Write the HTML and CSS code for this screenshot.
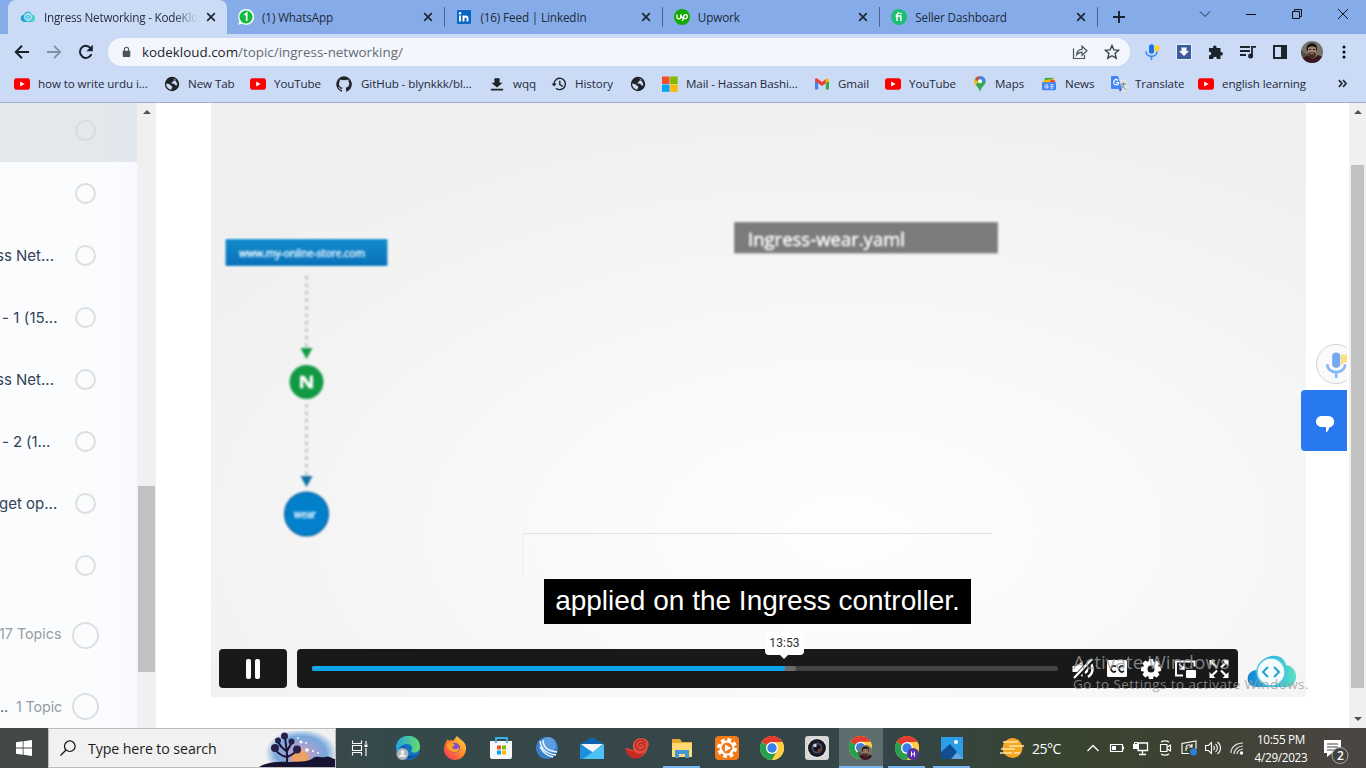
FILE: index.html
```html
<!DOCTYPE html>
<html lang="en">
<head>
<meta charset="utf-8">
<title>Ingress Networking - KodeKloud</title>
<link rel="stylesheet" href="styles.css">
</head>
<body>
<svg class="defs" aria-hidden="true">
  <symbol id="close" viewBox="0 0 10 10"><path d="M1.200 1.200l7.600 7.600M8.800 1.200L1.200 8.800" stroke="#1d2734" stroke-width="1.700"/></symbol>
  <symbol id="youtube" viewBox="0 0 16 16"><rect y="2.300" width="16" height="11.400" rx="2.600" fill="#f00"/><path d="M6.200 5.600v4.800L10.600 8z" fill="#fff"/></symbol>
  <symbol id="globe" viewBox="0 0 16 16"><circle cx="8" cy="8" r="7.200" fill="#202327"/><path d="M2.200 7.400c2 .1 3.600.4 4.200 1.700.5 1.200 1.700.7 1.900 1.900.2 1-.9 1-.8 2.600C4.600 13.300 2 11 2.200 7.400zM7.300 2.300l3.800.6c.8 1-.3 1.700-1.500 1.800-1 .1-.5 1.600-1.800 1.700-.9.1-.5 1.200.3 1.200 1.700 0 2.500.6 3.100 1.400.7.900 1.300.6 2.100.3-.2-3-2.500-6.600-6-7z" fill="#cbdbf6"/></symbol>
  <symbol id="chrome" viewBox="0 0 24 24"><circle cx="12" cy="12" r="12" fill="#ffce43"/><path d="M12 12L1.600 6A12 12 0 0 1 22.400 6z" fill="#e33b2e"/><path d="M1.600 6A12 12 0 0 0 12 24l5.200-9L12 12z" fill="#27a14d"/><path d="M12 6h10.400A12 12 0 0 1 12 24l5.200-9z" fill="#ffce43"/><circle cx="12" cy="12" r="6" fill="#fff"/><circle cx="12" cy="12" r="4.700" fill="#3b7de9"/></symbol>
  <symbol id="face" viewBox="0 0 22 22"><clipPath id="fc"><circle cx="11" cy="11" r="11"/></clipPath><g clip-path="url(#fc)"><rect width="22" height="22" fill="#77736a"/><path d="M0 9l7 5-3 8H0z" fill="#524f48"/><path d="M2 22v-5l5-3 5 4 5-4 5 2v6z" fill="#3b1720"/><path d="M5.500 8C5 1 16.500 0 16 8l-1 3-1-4H8l-1 4z" fill="#17130f"/><path d="M7 7c1-2 7-2 8 0v6c-1 5-7 5-8 0z" fill="#a8826f"/><path d="M7 12c2-1 6-1 8 0-.5 7-7 8-8 0z" fill="#3d2c25"/><path d="M9 12.800h4" stroke="#a8826f"/><path d="M8 8.500h2M12 8.500h2" stroke="#241b18"/></g></symbol>
  <symbol id="mic" viewBox="0 0 16 16"><path d="M10.500 1.500h5v5h-3l-2 2z" fill="#ffd02e"/><rect x="5" y=".3" width="5" height="9.500" rx="2.500" fill="#1a73e8"/><path d="M2 7.500c0 6.500 11 6.500 11 0M7.500 12.500V16" fill="none" stroke="#3b8bed" stroke-width="1.600"/></symbol>
</svg>

<header class="tabs">
  <div class="tab tab-active">
    <svg class="i16" viewBox="0 0 16 16"><defs><linearGradient id="kk"><stop stop-color="#1795d8"/><stop offset="1" stop-color="#4fdccb"/></linearGradient></defs><path d="M4 13a3.800 3.800 0 0 1 0-7.500C5 1.500 11 1.500 12 5.500a3.800 3.800 0 0 1 0 7.500z" fill="url(#kk)"/><circle cx="8" cy="8" r="3.600" fill="#8ed9ee" stroke="#c6eef8" stroke-width=".8"/><path d="M7 6.500L5.700 8 7 9.500M9 6.500L10.300 8 9 9.500" fill="none" stroke="#22a5d5" stroke-width=".9"/></svg>
    <span class="tab-title fade">Ingress Networking - KodeKlo</span><svg class="x"><use href="#close"/></svg>
  </div>
  <div class="tab"><svg class="i16" viewBox="0 0 16 16"><path d="M.2 15.800L1.300 11.900A8 8 0 1 1 4.200 14.800z" fill="#e9fff0"/><circle cx="8" cy="8" r="6.500" fill="#13b93d"/><path d="M6.400 5.900L8.700 4.200V12" fill="none" stroke="#fff" stroke-width="1.700"/></svg><span class="tab-title">(1) WhatsApp</span><svg class="x"><use href="#close"/></svg></div>
  <div class="tab"><svg class="i16" viewBox="0 0 16 16"><rect x="1" y="1" width="14" height="14" rx="1" fill="#0a66c2"/><path d="M4 6.600v6M7.500 12.600v-6M7.500 9.500c.2-2.600 4-2.600 4 0v3.100" fill="none" stroke="#fff" stroke-width="1.900"/><circle cx="4" cy="4.200" r="1.200" fill="#fff"/></svg><span class="tab-title">(16) Feed | LinkedIn</span><svg class="x"><use href="#close"/></svg></div>
  <div class="tab"><svg class="i16" viewBox="0 0 16 16"><circle cx="8" cy="8" r="8" fill="#14a800"/><path d="M3 5.500V8c0 2.500 3.700 2.500 3.700 0V5.500c.6 2.300 1.600 3.600 2.800 4.100M8.500 12l1.300-5c.9-2.300 4-1.600 3.500.8-.4 2-2.700 2.200-3.800 1.100" fill="none" stroke="#fff" stroke-width="1.300"/></svg><span class="tab-title">Upwork</span><svg class="x"><use href="#close"/></svg></div>
  <div class="tab"><svg class="i16" viewBox="0 0 16 16"><circle cx="8" cy="8" r="8" fill="#1dbf73"/><path d="M6 12V6.200c0-1.700.8-2.200 2.500-2.100M4.500 7h5.300v5" fill="none" stroke="#fff" stroke-width="1.500"/><circle cx="9.900" cy="4.600" r=".9" fill="#fff"/></svg><span class="tab-title">Seller Dashboard</span><svg class="x"><use href="#close"/></svg></div>
  <svg class="plus" viewBox="0 0 12 12"><path d="M6 0v12M0 6h12" stroke="#182334" stroke-width="1.900"/></svg>
  <div class="winbtns">
    <svg viewBox="0 0 12 12"><path d="M1 3.500l5 5 5-5" fill="none" stroke="#1b2b45"/></svg>
    <svg viewBox="0 0 12 12"><path d="M1 6.500h10" stroke="#111"/></svg>
    <svg viewBox="0 0 12 12"><path d="M1.500 3.500h7v7h-7zM3.500 3V1.500h7v7H9" fill="none" stroke="#111"/></svg>
    <svg viewBox="0 0 12 12"><path d="M1 1l10 10M11 1L1 11" stroke="#111"/></svg>
  </div>
</header>

<nav class="toolbar">
  <svg class="nav" viewBox="0 0 16 16"><path d="M15 8H2M8 1.800L1.800 8 8 14.200" fill="none" stroke="#17202c" stroke-width="2"/></svg>
  <svg class="nav" viewBox="0 0 16 16"><path d="M1 8h13M8 1.800L14.200 8 8 14.200" fill="none" stroke="#8290a8" stroke-width="1.800"/></svg>
  <svg class="nav" viewBox="0 0 16 16"><path d="M13.500 10.200A6 6 0 1 1 13 4.600" fill="none" stroke="#17202c" stroke-width="2"/><path d="M14.800.8v6.400H8.400z" fill="#17202c"/></svg>
  <div class="omnibox">
    <svg class="lock" viewBox="0 0 10 12"><rect x=".8" y="4.500" width="8.400" height="7" rx="1" fill="#4c545e"/><path d="M2.700 5V3a2.300 2.300 0 0 1 4.600 0v2" fill="none" stroke="#4c545e" stroke-width="1.200"/></svg>
    <span class="url">kodekloud.com<span class="path">/topic/ingress-networking/</span></span>
    <svg class="i16" viewBox="0 0 16 16"><path d="M1.500 4.500v10h11V11" fill="none" stroke="#4c545e" stroke-width="1.200"/><path d="M4.500 11c.5-4 2.500-5.500 5.500-5.600V2.200L15 6.800l-5 4.500V8.200c-2.500 0-4 .8-5.500 2.800z" fill="none" stroke="#4c545e" stroke-width="1.200"/></svg>
    <svg class="i16" viewBox="0 0 16 16"><path d="M8 1.500l1.900 4.400 4.800.4-3.600 3.200 1.100 4.700L8 11.700l-4.200 2.500 1.100-4.700L1.300 6.300l4.800-.4z" fill="none" stroke="#3c4550" stroke-width="1.400"/></svg>
  </div>
  <div class="exts">
    <svg class="i16"><use href="#mic"/></svg>
    <svg class="i16" viewBox="0 0 16 16"><rect x=".5" y=".5" width="15" height="15" fill="#3c5b9d" stroke="#e8eefb"/><path d="M5.500 3.500h5V7H13l-5 5-5-5h2.500z" fill="#f4f8ff"/></svg>
    <svg class="i16" viewBox="0 0 16 16"><path d="M1 4h4.200C4.300.7 9.300.7 8.500 4H12.500v4c3.200-.8 3.200 4.200 0 3.400V15H8.800c.5-3-4-3-3.500 0H1v-3.800c3 .4 3-4 0-3.500z" fill="#1d232c"/></svg>
    <svg class="i16" viewBox="0 0 16 16"><path d="M0 3h10M0 7h10M0 11h6M12 12.500V2.800h4" fill="none" stroke="#1d232c" stroke-width="1.800"/><circle cx="10.600" cy="12" r="2.500" fill="#1d232c"/></svg>
    <svg class="i16" viewBox="0 0 16 16"><path d="M2 2h12v12H2z" fill="none" stroke="#1d232c" stroke-width="2"/><path d="M9 2h5v12H9z" fill="#1d232c"/></svg>
    <svg class="i22"><use href="#face"/></svg>
    <svg class="i16" viewBox="0 0 16 16"><circle cx="8" cy="3" r="1.500"/><circle cx="8" cy="8" r="1.500"/><circle cx="8" cy="13" r="1.500"/></svg>
  </div>
</nav>

<nav class="bookmarks">
  <a><svg class="i16"><use href="#youtube"/></svg>how to write urdu i...</a>
  <a><svg class="i16"><use href="#globe"/></svg>New Tab</a>
  <a><svg class="i16"><use href="#youtube"/></svg>YouTube</a>
  <a><svg class="i16" viewBox="0 0 16 16"><path fill="#202327" d="M8 .2a8 8 0 0 0-2.500 15.500c.4.100.5-.2.500-.4v-1.500c-2 .5-2.600-.9-2.700-1-.1-.3-.5-1-.8-1.200-.3-.2-.7-.5 0-.5s1.100.6 1.300.9c.7 1.200 1.900.9 2.300.7.100-.5.300-.9.500-1.100-1.800-.2-3.600-.9-3.600-3.900 0-.9.300-1.600.8-2.200-.1-.2-.4-1 .1-2.100 0 0 .7-.2 2.200.8a7.500 7.500 0 0 1 4 0c1.500-1 2.200-.8 2.200-.8.400 1.100.200 1.900.1 2.100.5.600.8 1.300.8 2.200 0 3-1.900 3.700-3.700 3.900.3.300.6.800.6 1.500v2.200c0 .2.100.5.500.4A8 8 0 0 0 8 .2z"/></svg><span class="nudge">GitHub - blynkkk/bl...</span></a>
  <a><svg class="i14" viewBox="0 0 16 16"><path d="M5 1.500h6v5h3.500L8 12 1.500 6.500H5zM1 13.500h14v1.800H1z" fill="#202327"/></svg><span class="nudge">wqq</span></a>
  <a><svg class="i16" viewBox="0 0 16 16"><path d="M3 8a5.700 5.700 0 1 1 1.900 4.200M8.800 4.800v3.700l3 1.800" fill="none" stroke="#202327" stroke-width="1.400"/><path d="M.5 7.500h5.200L3.100 10.500z" fill="#202327"/></svg>History</a>
  <a><svg class="i16"><use href="#globe"/></svg></a>
  <a><svg class="i16" viewBox="0 0 16 16"><path fill="#f25022" d="M0 .5h7.500V8H0z"/><path fill="#7fba00" d="M8.200.5h7.500V8H8.200z"/><path fill="#00a4ef" d="M0 8.600h7.500v7.200H0z"/><path fill="#ffb900" d="M8.200 8.600h7.500v7.200H8.200z"/></svg>Mail - Hassan Bashi...</a>
  <a><svg class="i16" viewBox="0 0 16 16"><path fill="#4285f4" d="M1 13.500V4l3.200 2.500v7z"/><path fill="#34a853" d="M15 13.500V4l-3.200 2.500v7z"/><path fill="#ea4335" d="M1 3c.8-1.200 2-.7 3 .1L8 6l4-2.900v3.800L8 10 1 5z"/><path fill="#fbbc04" d="M11.800 3.200c1-.9 2.500-1 3.200.3V5l-3.200 2.300z"/></svg>Gmail</a>
  <a><svg class="i16"><use href="#youtube"/></svg>YouTube</a>
  <a><svg class="pin" viewBox="0 0 14 16"><path fill="#34a853" d="M1.500 6C.5-1.500 13.500-1.500 12.500 6 12 10 8 10.500 7 16 6 11 1.500 9 1.500 6z"/><path fill="#4285f4" d="M7 .2C10 0 12.500 2 12.500 5L9 6 6 3z"/><path fill="#ea4335" d="M2 3C3 .8 5 .1 7 .2L4.500 5z"/><path fill="#fbbc04" d="M1.500 5L2 3l3 3-2.500 3.500C1.700 8 1.400 7 1.500 5z"/><circle cx="7" cy="5.300" r="2" fill="#fff"/></svg>Maps</a>
  <a><svg class="i14" viewBox="0 0 16 16"><path fill="#34a853" d="M3 1h10v6H3z"/><path fill="#fbbc04" d="M1 4l12-2 2 5H2z"/><path fill="#ea4335" d="M10 3l5 1v4h-6z"/><rect y="6" width="16" height="9" rx="1.200" fill="#4285f4"/><path d="M7 9H4.200C2 11 4 14 7 12v-1.200H5M9.500 8.800H13M9.500 10.700H13M9.500 12.700H13" fill="none" stroke="#fff"/></svg><span class="nudge">News</span></a>
  <a><svg class="i16" viewBox="0 0 16 16"><path d="M7 4h8l1 1v11H9z" fill="#e0e1e5"/><path d="M0 1q0-1 1-1h6l4 13H1q-1 0-1-1z" fill="#4285f4"/><path d="M7 4.500C4.500 2 1.800 5 3 7.500s5 1.500 4.700-.9H5.200" fill="none" stroke="#fff" stroke-width="1.200"/><path d="M10 8h5M12.500 6.500V8c0 2-2 4-2 4M11 9.500l4 4" fill="none" stroke="#687b98"/><path d="M8 13h3l-2 3z" fill="#335ec0"/></svg>Translate</a>
  <a><svg class="i16"><use href="#youtube"/></svg>english learning</a>
  <a><svg class="more" viewBox="0 0 8 8"><path d="M.8 1L3.500 4 .8 7M4.500 1l2.700 3-2.700 3" fill="none" stroke="#202a36" stroke-width="1.500"/></svg></a>
</nav>

<main class="page">
  <aside class="topics">
    <div class="topic current"><span></span><i></i></div>
    <div class="topic"><span></span><i></i></div>
    <div class="topic"><span class="net">ss Net...</span><i></i></div>
    <div class="topic"><span class="lab">- 1 (15...</span><i></i></div>
    <div class="topic"><span class="net">ss Net...</span><i></i></div>
    <div class="topic"><span class="lab two">- 2 (1...</span><i></i></div>
    <div class="topic"><span>get op...</span><i></i></div>
    <div class="topic"><span></span><i></i></div>
    <div class="topic lesson"><span>17 Topics</span><i></i></div>
    <div class="topic lesson last"><span><b>..</b>&nbsp; 1 Topic</span><i></i></div>
  </aside>
  <div class="scroll side-scroll"><svg viewBox="0 0 8 4"><path d="M0 4l4-4 4 4z" fill="#505050"/></svg><div class="thumb"></div></div>

  <section class="video">
    <svg class="slide" viewBox="211 103 1095 594">
      <defs>
        <radialGradient id="paper" cx=".58" cy=".72" r=".72"><stop stop-color="#fefefe"/><stop offset=".4" stop-color="#f9f9f9"/><stop offset="1" stop-color="#f0f0f0"/></radialGradient>
        <linearGradient id="blue" x2="0" y2="1"><stop stop-color="#138bcd"/><stop offset="1" stop-color="#0871b9"/></linearGradient>
      </defs>
      <rect x="211" y="103" width="1095" height="594" fill="url(#paper)"/>
      <path d="M522.500 533.500H993" stroke="#e2e2e2"/><path d="M522.500 534v44" stroke="#efefef"/>
      <g class="soft">
        <rect x="224" y="237" width="165" height="31" fill="#fff" opacity=".7"/>
        <rect x="225.500" y="239" width="162" height="27" fill="url(#blue)"/>
        <text x="239" y="257" textLength="126" lengthAdjust="spacingAndGlyphs" class="host">www.my-online-store.com</text>
        <path d="M306.500 276v72M306.500 404v72" stroke="#bccad0" stroke-width="3" stroke-dasharray="3.500 4"/>
        <path d="M300.500 348h12l-6 11z" fill="#159a47"/>
        <circle cx="306.500" cy="382" r="17" fill="#119a43"/>
        <text x="298.500" y="387.500" textLength="16" lengthAdjust="spacingAndGlyphs" class="n">N</text>
        <path d="M300.500 476h12l-6 11z" fill="#0b6fa8"/>
        <circle cx="306.500" cy="514" r="21.800" fill="#0380cc" stroke="#0a67a2" stroke-width="1.500"/>
        <text x="294" y="518" textLength="22" lengthAdjust="spacingAndGlyphs" class="host">wear</text>
        <rect x="734.500" y="222.500" width="263" height="30.500" fill="#7c7c7c" stroke="#8f8f8f"/>
        <text x="748" y="246" textLength="157" lengthAdjust="spacingAndGlyphs" class="yaml">Ingress-wear.yaml</text>
      </g>
    </svg>
    <div class="player">
      <div class="caption">applied on the Ingress controller.</div>
      <div class="controls">
        <div class="pause"><b></b><b></b></div>
        <div class="bar">
          <div class="track"><div class="buffered"></div><div class="played"></div><div class="tip">13:53</div></div>
          <svg viewBox="0 0 24 24"><path d="M1.500 9h4l6-5v16l-6-5h-4z" fill="#fff"/><path d="M14 8c3 2 3 6 0 8M17 4c6 4 6 12 0 16" fill="none" stroke="#fff" stroke-width="2.500"/><path d="M3 22L22 2" stroke="#191919" stroke-width="5"/><path d="M3 21L21 2" stroke="#fff" stroke-width="2.200"/></svg>
          <svg viewBox="0 0 24 24"><rect x="2" y="3" width="20" height="17" rx="1.500" fill="#fff"/><path d="M11 9.500c-5-3-7 5-2 5.500l2-1M19 9.500c-5-3-7 5-2 5.500l2-1" fill="none" stroke="#222" stroke-width="1.800"/></svg>
          <svg viewBox="0 0 24 24"><path fill="#fff" fill-rule="evenodd" d="M10 2h4l.8 3.200 2.900-1.600 2.800 2.800-1.600 2.900 3.100.7v4l-3.200.8 1.700 2.900-2.800 2.800-3-1.600-.7 3.100h-4l-.8-3.200-2.900 1.700-2.800-2.800 1.600-3L2 14v-4l3.200-.8-1.700-2.900 2.800-2.800 3 1.600zM12 8.500a3.500 3.500 0 1 0 0 7 3.500 3.500 0 0 0 0-7z"/></svg>
          <svg viewBox="0 0 24 24"><path d="M21.500 9.500V4.500H3v14h7" fill="none" stroke="#fff" stroke-width="1.900"/><rect x="13" y="13" width="10" height="8" rx="1" fill="#fff"/><path d="M6 7l5 5M11 7.500V12H6.500" fill="none" stroke="#fff" stroke-width="1.600"/></svg>
          <svg viewBox="0 0 24 24"><path d="M2.500 9V3h6zM15.500 3h6v6zM2.500 15v6h6zM21.500 15v6h-6z" fill="#fff"/><path d="M4 4.500l6 6M20 4.500l-6 6M4 19.500l6-6M20 19.500l-6-6" stroke="#fff" stroke-width="2.200"/></svg>
        </div>
        <svg class="cloud" viewBox="0 0 50 34"><defs><linearGradient id="cl"><stop stop-color="#1682d5"/><stop offset=".5" stop-color="#1ebae0"/><stop offset="1" stop-color="#63dfc3"/></linearGradient></defs><path d="M10 32C-3 32-2 15 10 15 14-3 37-3 39 10c14 2 13 22 0 22z" fill="url(#cl)"/><circle cx="24" cy="17" r="14" fill="#f6fcfd" stroke="#58c8df" stroke-width="1.500"/><path d="M21 12L16 17l5 5M27 12l5 5-5 5" fill="none" stroke="#20a2d0" stroke-width="2"/></svg>
      </div>
    </div>
  </section>

  <div class="scroll page-scroll"><svg viewBox="0 0 8 4"><path d="M0 4l4-4 4 4z" fill="#505050"/></svg><div class="thumb"></div><svg viewBox="0 0 8 4"><path d="M0 0l4 4 4-4z" fill="#505050"/></svg></div>

  <div class="floaters">
    <div class="voice"><svg><use href="#mic"/></svg></div>
    <div class="chat"><svg viewBox="0 0 20 18"><path d="M7 1h6c8 0 8 11 1 11.500C14 15 12.500 16.500 11 17.500V12H7C-1 12-1 1 7 1z" fill="#fff"/></svg></div>
  </div>
  <div class="watermark"><p class="wm-big">Activate Windows</p><p class="wm-small">Go to Settings to activate Windows.</p></div>
</main>

<footer class="taskbar">
  <div class="start"><svg viewBox="0 0 16 16"><path d="M0 2.300l6.700-1v6.300H0zM7.500 1.200L16 0v7.600H7.500zM0 8.400h6.700v6.300L0 13.700zM7.500 8.400H16V16l-8.500-1.200z" fill="#fff"/></svg></div>
  <div class="search">
    <svg class="lens" viewBox="0 0 16 16"><circle cx="9.800" cy="6.200" r="5.300" fill="none" stroke="#111" stroke-width="1.200"/><path d="M6 10L.5 15.500" stroke="#111" stroke-width="1.200"/></svg>
    <span>Type here to search</span>
    <svg class="art" viewBox="0 0 76 36"><defs><radialGradient id="sky"><stop stop-color="#f3b07a"/><stop offset=".3" stop-color="#a9a0d0"/><stop offset=".7" stop-color="#77a9dc"/><stop offset="1" stop-color="#f1f1f1"/></radialGradient></defs><ellipse cx="42" cy="22" rx="36" ry="24" fill="url(#sky)"/><circle cx="41" cy="29" r="9" fill="#eda264"/><path d="M0 36c8-5 20-6 29-5 10-1 16 1 24-3 4-4 8-1 13-2 5-2 7 2 10 2v8z" fill="#171333"/><path d="M27 36c3-10 0-19-1-30M28 26c-5-1-10-4-12-9M27 20c-4-3-6-5-8-9M28 26c5-2 9-5 10-8M28 20l5-9" fill="none" stroke="#171333" stroke-width="2"/><g fill="#262049"><circle cx="25.500" cy="5" r="3.500"/><circle cx="16" cy="17" r="4"/><circle cx="38" cy="18.500" r="4"/><circle cx="19" cy="9.500" r="3"/><circle cx="32.500" cy="10.500" r="3"/></g><g fill="#fff"><circle cx="42" cy="11" r="1.500"/><circle cx="48" cy="19" r="1.800"/><circle cx="54" cy="20" r="1"/><circle cx="47" cy="12" r=".9"/><circle cx="59" cy="22" r=".9"/><circle cx="39" cy="7" r=".9"/></g></svg>
  </div>
  <div class="apps">
    <div><svg class="i18" viewBox="0 0 18 18"><path d="M1.500 1.500v3h9v-3M1.500 16.500v-3h9v3M1.500 6.500h9v5h-9zM15 2v3M15 9v8" fill="none" stroke="#fff" stroke-width="1.100"/><path d="M13.500 5.500h3v2.500h-3z" fill="#fff"/></svg></div>
    <div><svg viewBox="0 0 24 24"><defs><linearGradient id="ed" x2="1"><stop stop-color="#22a5df"/><stop offset="1" stop-color="#67dd67"/></linearGradient></defs><circle cx="12" cy="12" r="12" fill="#1174c6"/><path d="M0 11C1-4 24-4 24 11c0 6-8 7-9 4 3-3 0-7-4-7S2 10 1 17z" fill="url(#ed)"/><path d="M10 10c-4 5 2 12 11 9-4 4-12 6-16 2-4-5-1-10 5-11z" fill="#0d529c"/><circle cx="6.500" cy="18" r="6" fill="#aeb5b8"/><circle cx="6.500" cy="16" r="2" fill="#eee"/><path d="M3 21c0-4 7-4 7 0z" fill="#eee"/></svg></div>
    <div><svg viewBox="0 0 24 24"><defs><linearGradient id="ff" x1="1" x2="0" y2="1"><stop stop-color="#ffe14a"/><stop offset=".5" stop-color="#ff8429"/><stop offset="1" stop-color="#f72c60"/></linearGradient></defs><path d="M3 6l2-3 1 2 2-1 2 1 4-5c2 3 10 6 9 13-1 15-22 14-22 0 0-3 1-5 2-7z" fill="url(#ff)"/><circle cx="12" cy="12" r="5" fill="#8150cf"/><path d="M4 8c2-2 6-1 8 1l-3 2c1 3 5 3 7 0 1 5-4 7-8 4S4 12 4 8z" fill="#ff9f26"/></svg></div>
    <div><svg viewBox="0 0 24 24"><path d="M7 6V2h11v4" fill="none" stroke="#3daeeb" stroke-width="1.800"/><path d="M1 5h22v16q0 2-2 2H3q-2 0-2-2z" fill="#f5f7f8"/><path d="M7 5v2M18 5v2" stroke="#3daeeb" stroke-width="1.800"/><path fill="#f25022" d="M8 9.500h4v4H8z"/><path fill="#7fba00" d="M13 9.500h4v4h-4z"/><path fill="#00a4ef" d="M8 14.500h4v4H8z"/><path fill="#ffb900" d="M13 14.500h4v4h-4z"/></svg></div>
    <div><svg viewBox="0 0 24 24"><circle cx="12" cy="12" r="11" fill="#397fc9"/><circle cx="13" cy="9" r="8" fill="#5b9edf"/><path d="M5 5c1 8 7 13 16 14M8 4c0 7 5 11 14 12M5 11c3 6 8 9 13 10" fill="none" stroke="#eaf6ff" stroke-width="1.500"/></svg></div>
    <div><svg viewBox="0 0 24 24"><path d="M0 8L12 1l12 7v15H0z" fill="#1262ae"/><path d="M1 8h22L12 17z" fill="#f4f7f8"/><path d="M0 8l14 9-7 6H0z" fill="#1c90df"/><path d="M24 8v15H3z" fill="#4ec2f6"/></svg></div>
    <div><svg viewBox="0 0 24 24"><path d="M0 12c4 1 7 1 9 3-3-6 0-13 7-13 7 0 9 6 7 9C20 25 4 26 0 12z" fill="#e44d3b"/><path d="M21 7c-4-6-12-2-10 4 2 5 9 3 9-1-1-4-6-4-6-1 0 2 3 2 3 0" fill="none" stroke="#a52b25" stroke-width="1.200"/><path d="M0 12c4 3 7 3 9 3 2 3 7 4 11 1C14 26 3 25 0 12z" fill="#c82924"/></svg></div>
    <div class="open files"><svg viewBox="0 0 24 24"><path d="M2 3h8l2 3h10v15H2z" fill="#e4a82e"/><path d="M2 7h20v14H2z" fill="#ffda72"/><path d="M5 22v-8h14v8h-4v-4H9v4z" fill="#4298d5"/></svg></div>
    <div><svg viewBox="0 0 24 24"><rect width="24" height="24" rx="4" fill="#f27b17"/><circle cx="12" cy="12" r="8.500" fill="none" stroke="#fff" stroke-width="3" stroke-dasharray="3.800 2.900"/><circle cx="12" cy="12" r="7.500" fill="#fff"/><circle cx="12" cy="12" r="5.500" fill="#f27b17"/><path d="M10 8.500v7l6-3.500z" fill="#fff"/><path d="M7 14l2 4M17 14l-2 4" stroke="#fff" stroke-width="1.500"/></svg></div>
    <div><svg><use href="#chrome"/></svg></div>
    <div><svg viewBox="0 0 24 24"><rect width="24" height="24" rx="3" fill="#d7d7d5"/><circle cx="12" cy="12" r="10" fill="#eee"/><circle cx="12" cy="12" r="9" fill="#181a20"/><circle cx="12" cy="12" r="5.500" fill="#494b60"/><circle cx="12" cy="12" r="3.500" fill="#101119"/><circle cx="10" cy="9.500" r="1.800" fill="#d6d0df"/><circle cx="14" cy="14" r="1.500" fill="#a12934"/></svg></div>
    <div class="open focus"><svg viewBox="0 0 24 24"><use href="#chrome" width="23" height="23"/><use href="#face" x="9" y="9" width="15" height="15"/></svg></div>
    <div class="open"><svg viewBox="0 0 24 24"><use href="#chrome"/><circle cx="18" cy="18" r="6" fill="#5931a5"/><path d="M16.500 15.500v5M19.500 15.500v5M16.500 18h3" stroke="#fff"/></svg></div>
    <div class="open"><svg viewBox="0 0 24 24"><rect x="1" y="1" width="22" height="22" fill="#2c9ee9"/><path d="M1 16l9-8 13 15H1z" fill="#124d91"/><path d="M11 23l6-7 6 6v1z" fill="#63a4e4"/><circle cx="16" cy="6" r="2" fill="#fff"/></svg></div>
  </div>
  <div class="weather"><svg viewBox="0 0 24 22"><circle cx="12.500" cy="11" r="10" fill="#f5a522"/><path d="M3 5h15M9 9h15M1 12h14M0 16h12M14 16h6" stroke="#ffe6a8" stroke-width="1.500"/></svg>25°C</div>
  <div class="tray">
    <svg viewBox="0 0 16 16"><path d="M2.500 11L8 5.500l5.500 5.500" fill="none" stroke="#fff" stroke-width="1.300"/></svg>
    <svg viewBox="0 0 16 16"><path d="M1.500 4.500h12v7h-12zM14.500 6.500v3" fill="none" stroke="#fff" stroke-width="1.200"/><path d="M3 6h4v4H3z" fill="#fff"/></svg>
    <svg viewBox="0 0 16 16"><path d="M5 3h9.500v7.500H5zM9.500 11v3M6 14.500h7" fill="none" stroke="#fff" stroke-width="1.300"/><path d="M0 4h6v5H0z" fill="#fff"/><path d="M1.500 4V2.500h3V4" fill="none" stroke="#fff"/></svg>
    <svg viewBox="0 0 16 16"><path d="M3.500 4.500h6.500v7H3.500zM10.500 7l3-2v6l-3-2M4 2c2-1.500 6-1.500 8 0M4 14c2 1.500 6 1.500 8 0" fill="none" stroke="#fff" stroke-width="1.100"/></svg>
    <svg viewBox="0 0 16 16"><path d="M8 13.500H1v-10L15 1v8M5 7c1-3 5-3 6 0M11 4v3H8M5 11V8h2" fill="none" stroke="#fff" stroke-width="1.100"/><circle cx="12.500" cy="12" r="3.500" fill="#2b80d2"/></svg>
    <svg viewBox="0 0 16 16"><path d="M.5 5.500h3l3-3v11l-3-3h-3zM8.500 6c1.200 1 1.200 3 0 4M10.500 4c2.500 2 2.500 6 0 8M12.500 2c4 3 4 9 0 12" fill="none" stroke="#fff" stroke-width="1.100"/></svg>
    <svg viewBox="0 0 16 16"><path d="M2 13C2 7 7 3 14 3M5 14c0-4 4-8 9-8M8 14c0-3 3-5 6-5" fill="none" stroke="#ddd" stroke-width="1.200"/><circle cx="12.500" cy="13" r="1.700" fill="#fff"/></svg>
  </div>
  <div class="clock"><div>10:55 PM</div><div>4/29/2023</div></div>
  <div class="notes"><svg viewBox="0 0 26 26"><path d="M1 2h17v13h-9l-5 4v-4H1z" fill="#fff"/><path d="M4 6h11M4 9h11M4 12h8" stroke="#454942"/><circle cx="17" cy="17.500" r="8" fill="#41433f" stroke="#aaa"/></svg><b>2</b></div>
</footer>
</body>
</html>
```
FILE: styles.css
```css
* { box-sizing: border-box; }
body {
  margin: 0; width: 1366px; height: 768px; overflow: hidden;
  display: flex; flex-direction: column;
  font: 12px "Open Sans", "Noto Sans", sans-serif; color: #1f2a3a; background: #fff;
}
svg { display: block; flex: none; }
.defs { position: absolute; width: 0; height: 0; }
.i14 { width: 14px; height: 14px; }
.i16 { width: 16px; height: 16px; }
.i22 { width: 22px; height: 22px; }

.tabs { height: 34px; flex: none; display: flex; background: #85ace9; padding-left: 8px; }
.tab { width: 217.4px; display: flex; align-items: center; position: relative; padding: 0 11px; gap: 8px; font-size: 11.7px; letter-spacing: -.12px; }
.tab + .tab:not(:nth-child(2)) { padding-left: 12px; }
.tab:not(.tab-active)::after { content: ""; position: absolute; right: -1px; top: 7px; width: 1px; height: 20px; background: #45648f; }
.tab-active { width: 219px; background: #cbdbf6; border-radius: 8px 8px 0 0; padding: 0 11px 0 12px; }
.tab-title { flex: 1; min-width: 0; white-space: nowrap; }
.fade { letter-spacing: -.22px; -webkit-mask-image: linear-gradient(90deg, #000 84%, transparent); mask-image: linear-gradient(90deg, #000 84%, transparent); }
.x { width: 10px; height: 10px; }
.plus { width: 12px; height: 12px; margin: 11px 0 0 16px; }
.winbtns { display: flex; gap: 34px; margin: 8px 0 0 74px; }
.winbtns svg { width: 12px; height: 12px; }

.toolbar { height: 36px; flex: none; display: flex; align-items: center; background: #cbdbf6; padding-left: 14px; }
.nav { width: 16px; height: 16px; margin-right: 16px; }
.omnibox { width: 1022px; height: 28px; margin-left: -2px; padding: 0 10px 0 14px; border-radius: 14px; background: #f3f7fd; display: flex; align-items: center; gap: 16px; }
.lock { width: 9px; height: 12px; margin-right: -5px; }
.url { flex: 1; font-size: 13.4px; color: #1f242b; }
.path { color: #646b74; }
.exts { display: flex; align-items: center; gap: 16px; margin-left: 14px; }
.exts .i22 { margin: 0 -3px 0 -3px; }

.bookmarks {
  height: 33px; flex: none; display: grid; align-items: center; padding: 0 0 5px 14px;
  grid-template-columns: 150px 86px 86px 154px 61px 79px 32px 152px 71px 88px 69px 69px 87px 140px 20px;
  background: #cbdbf6; border-bottom: 1px solid #9fb0cc; font-size: 11.6px;
}
.bookmarks a { display: flex; align-items: center; gap: 8px; white-space: nowrap; letter-spacing: -.09px; }
.pin { width: 14px; height: 16px; }
.bookmarks .nudge { margin-left: 1px; }
.more { width: 9px; height: 9px; }

.page { flex: 1; min-height: 0; display: flex; position: relative; overflow: hidden; }
.topics { width: 137px; flex: none; background: linear-gradient(90deg, #fafcfe 78%, #f8f9fd); overflow: hidden; }
.topic { height: 62px; padding: 1px 41px 0 0; display: flex; align-items: center; justify-content: space-between; white-space: nowrap; font: 15px Inter, sans-serif; color: #344258; }
.topic i { width: 21px; height: 21px; border: 2px solid #dddfe1; border-radius: 50%; flex: none; }
.topic span { margin-left: -1px; }
.topic .net { margin-left: -4px; }
.topic .lab { margin-left: 2px; letter-spacing: .1px; }
.topic .two { letter-spacing: -.1px; }
.current { height: 59px; background: linear-gradient(90deg, #e3e8ec 78%, #e2e7f0); }
.current i { margin-top: -5px; border-color: #d7dce0; }
.lesson { height: 70px; margin-top: 4px; padding: 1px 38px 0 0; font-size: 14.3px; color: #989ca1; }
.lesson span { margin-top: -4px; }
.lesson i { width: 27px; height: 27px; }
.last { margin-top: 1px; }
.topic.last span { margin: 0; letter-spacing: -.1px; }
.last b { color: #344258; font-weight: 400; }

.scroll { background: #f0f0f0; display: flex; flex-direction: column; align-items: center; flex: none; }
.scroll svg { width: 8px; height: 4px; margin-top: 7px; }
.scroll .thumb { background: #c1c1c1; }
.side-scroll { width: 19px; }
.side-scroll .thumb { width: 17px; height: 186px; margin-top: 372px; }
.page-scroll { width: 17px; margin-left: 43px; }
.page-scroll .thumb { width: 13px; height: 523px; margin-top: 51px; }
.page-scroll svg:last-child { margin-top: 29px; }

.video { width: 1095px; height: 594px; margin-left: 55px; flex: none; display: grid; }
.slide, .player { grid-area: 1 / 1; }
.slide { width: 1095px; height: 594px; }
.soft { filter: blur(.8px); }
.host { font: 10.500px "Open Sans", sans-serif; fill: #e2f4ff; stroke: #e2f4ff; stroke-width: .5px; }
.n { font: bold 16px "Open Sans", sans-serif; fill: #fff; stroke: #fff; stroke-width: .5px; }
.yaml { font: 19px "Open Sans", sans-serif; fill: #fff; stroke: #fff; stroke-width: .4px; }
.player { position: relative; display: flex; flex-direction: column; justify-content: flex-end; padding: 0 8px 9px; }
.caption { width: 427px; height: 45px; margin: 0 0 25px 325px; background: #000; color: #fff; font: 28px/44px "Liberation Sans", sans-serif; text-align: center; white-space: nowrap; }
.controls { height: 39px; display: flex; }
.pause { width: 68px; border-radius: 4px; background: #191919; display: flex; align-items: center; justify-content: center; gap: 4px; }
.pause b { width: 5px; height: 20px; background: #fff; border-radius: 2px; }
.bar { width: 941px; margin-left: 10px; padding: 0 8px 0 15px; border-radius: 4px; background: #191919; display: flex; align-items: center; }
.bar svg { width: 24px; height: 24px; margin-left: 10px; }
.bar .track + svg { margin-left: 13px; }
.track { width: 746px; flex: none; height: 5px; background: #444; border-radius: 2px; position: relative; }
.buffered { width: 484px; height: 5px; background: #6b6b6b; border-radius: 2px; }
.played { width: 473px; height: 5px; margin-top: -5px; background: #0ba5e9; border-radius: 2px; }
.tip { position: absolute; left: 453px; top: -34px; width: 39px; height: 23px; border-radius: 4px; background: #fff; color: #333; font: 12px/22px Roboto, sans-serif; text-align: center; letter-spacing: .1px; }
.tip::after { content: ""; position: absolute; left: 15px; top: 23px; border: 4px solid transparent; border-top-color: #fff; }
.cloud { width: 50px; height: 34px; margin: 6px 0 0 9px; }

.floaters { position: absolute; left: 1301px; top: 241px; width: 46px; overflow: hidden; }
.voice { width: 40px; height: 40px; margin: 0 0 6px 15px; border: 1.5px solid #c9cacc; border-radius: 50%; background: #fafafa; display: flex; align-items: center; justify-content: center; opacity: .85; padding: 2px 0 0 2px; }
.voice svg { width: 26px; height: 26px; opacity: .7; }
.chat { height: 61px; border-radius: 4px 0 0 4px; background: #2879ef; display: flex; align-items: center; justify-content: center; padding: 6px 0 0 2px; }
.chat svg { width: 20px; height: 18px; }
.watermark { position: absolute; left: 1073px; top: 547px; color: #9b9b9bd0; white-space: nowrap; }
.watermark p { margin: 0; }
.wm-big { font-size: 19px; line-height: 25px; letter-spacing: .02px; }
.wm-small { font-size: 13.5px; line-height: 19px; letter-spacing: .42px; }

.taskbar { height: 40px; flex: none; display: flex; background: linear-gradient(90deg, #454747, #36494a 28%, #344547 65%, #38442f 78%, #414236 90%, #4b4644); color: #fff; }
.start { width: 48px; display: flex; align-items: center; justify-content: center; }
.start svg { width: 16px; height: 16px; }
.search { width: 288px; background: #f1f1f1; border: 1px solid #bbb; display: flex; align-items: center; color: #1c1c1c; padding-left: 11px; font-size: 14.2px; letter-spacing: -.1px; overflow: hidden; }
.lens { width: 16px; height: 16px; margin-right: 12px; }
.art { width: 76px; height: 36px; margin: 2px 0 0 auto; }
.apps { display: grid; grid-template-columns: 48px 48px 46px 46px repeat(10, 45px); align-items: stretch; }
.apps div { display: flex; align-items: center; justify-content: center; position: relative; }
.apps svg { width: 24px; height: 24px; }
.apps .i18 { width: 18px; height: 18px; }
.apps .open { border-bottom: 2px solid #76b5ed; margin: 0 4px; padding-top: 2px; }
.apps .open.focus { background: #5e6d6e; margin: 0 1px 0 0; }
.weather { width: 84px; padding-left: 26px; display: flex; align-items: center; gap: 8px; font-size: 14px; letter-spacing: -.5px; white-space: nowrap; }
.weather svg { width: 24px; height: 22px; }
.tray { display: flex; align-items: center; gap: 8px; margin-left: 27px; }
.tray svg { width: 16px; height: 16px; }
.clock { width: 70px; margin-left: 1px; text-align: center; font-size: 11.7px; line-height: 18px; padding-top: 2px; letter-spacing: -.28px; white-space: nowrap; }
.notes { display: grid; margin: 10px 0 0 7px; width: 32px; }
.notes svg, .notes b { grid-area: 1 / 1; }
.notes svg { width: 26px; height: 26px; }
.notes b { font-weight: 600; padding: 9px 0 0 14px; line-height: 17px; }
```
